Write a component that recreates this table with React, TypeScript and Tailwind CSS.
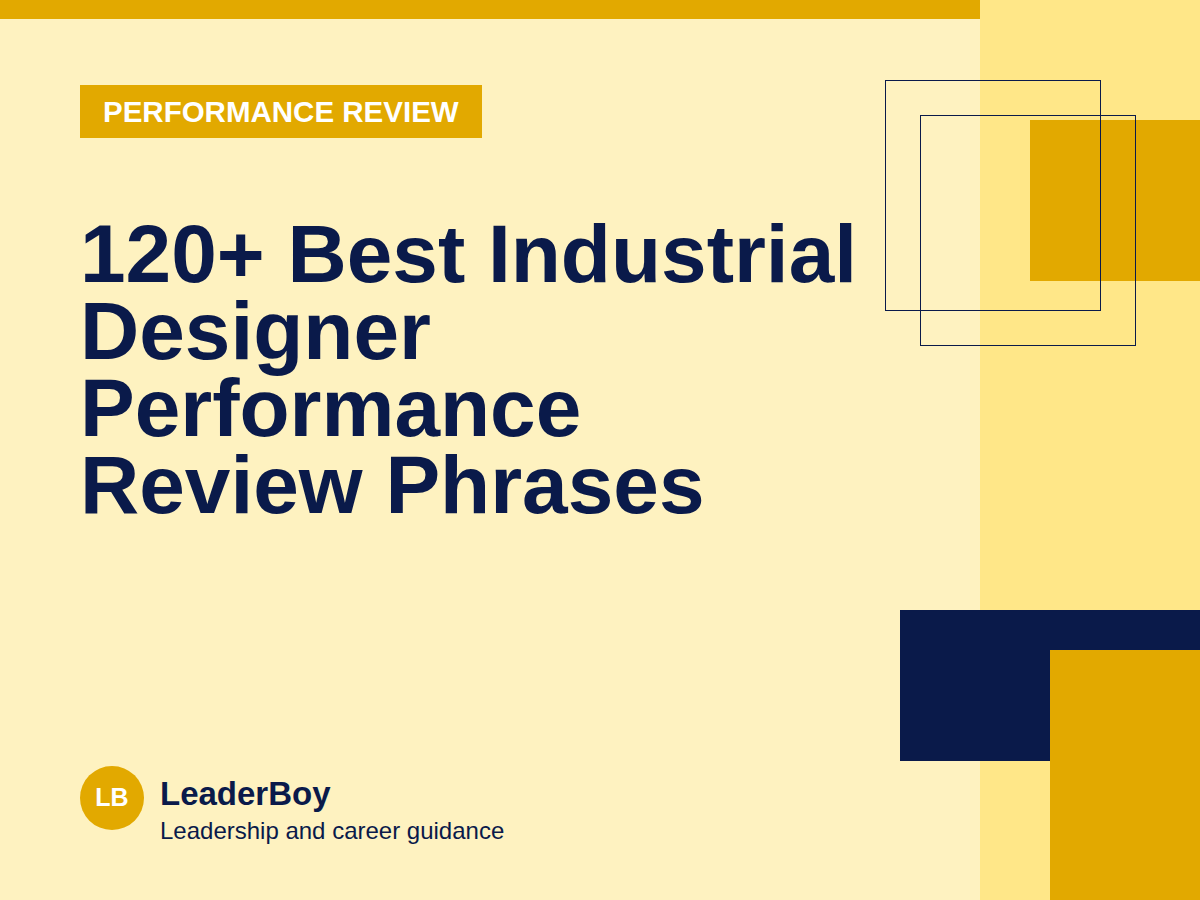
const NAVY = "text-[#0a1a4a]";

function Decorations() {
  return (
    <>
      {/* top right cluster */}
      <div className="absolute left-[1030px] top-[120px] h-[161px] w-[170px] bg-[#e2a900]" />
      <div className="absolute left-[885px] top-[80px] h-[231px] w-[216px] border border-[#0a1a4a]" />
      <div className="absolute left-[920px] top-[115px] h-[231px] w-[216px] border border-[#0a1a4a]" />
      {/* bottom right cluster */}
      <div className="absolute left-[900px] top-[610px] h-[151px] w-[300px] bg-[#0a1a4a]" />
      <div className="absolute left-[1050px] top-[650px] h-[250px] w-[150px] bg-[#e2a900]" />
    </>
  );
}

export default function App() {
  return (
    <div
      className="relative flex h-[900px] w-[1200px] overflow-hidden bg-[#fef2c0]"
      style={{ fontFamily: '"Liberation Sans", Arial, sans-serif' }}
    >
      <div className="flex h-full w-[980px] flex-col">
        <div className="h-[19px] w-full bg-[#e2a900]" />

        <div className="flex flex-col items-start px-[80px] pt-[66px]">
          <div className="flex h-[53px] items-center whitespace-nowrap bg-[#e2a900] px-[23px] text-[29.5px] font-bold leading-none text-white">
            PERFORMANCE REVIEW
          </div>

          <h1 className={`mt-[77px] text-[82px] font-bold leading-[77px] ${NAVY}`}>
            120+ Best Industrial
            <br />
            Designer
            <br />
            Performance
            <br />
            Review Phrases
          </h1>
        </div>

        <div className="mt-auto mb-[55px] flex items-start gap-4 px-[80px]">
          <div className="flex h-[64px] w-[64px] shrink-0 items-center justify-center rounded-full bg-[#e2a900] text-[25px] font-bold text-white">
            LB
          </div>
          <div className={`mt-[10px] ${NAVY}`}>
            <div className="text-[33px] font-bold leading-[36px]">LeaderBoy</div>
            <div className="mt-[5px] text-[24px] leading-[28px]">
              Leadership and career guidance
            </div>
          </div>
        </div>
      </div>

      <div className="h-full w-[220px] bg-[#ffe788]" />

      <Decorations />
    </div>
  );
}
